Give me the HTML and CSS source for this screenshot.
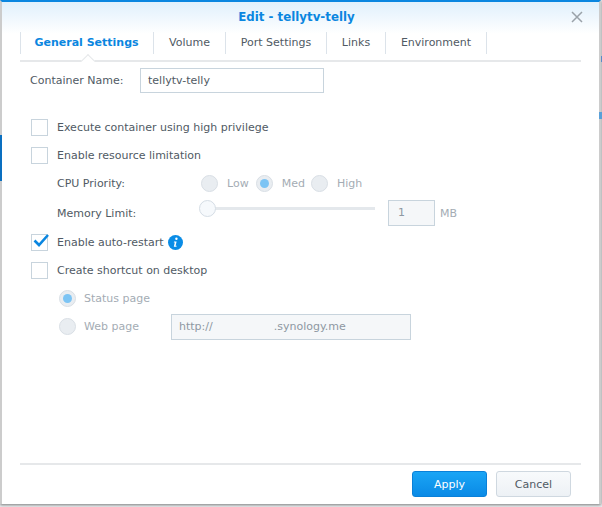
FILE: index.html
```html
<!DOCTYPE html>
<html lang="en">
<head>
  <meta charset="UTF-8">
  <title>Edit - tellytv-telly</title>
  <link rel="stylesheet" href="styles.css">
</head>
<body>
  <div class="dialog">
    <div class="title-row">
      <span class="title">Edit - tellytv-telly</span>
      <svg class="close" width="12" height="12" viewBox="0 0 12 12"><path d="M1 1 11 11M11 1 1 11" stroke="#9aa2a9" stroke-width="1.5" fill="none"/></svg>
    </div>
    <ul class="tabs">
      <li class="tab cur">General Settings</li>
      <li class="tab tab-volume">Volume</li>
      <li class="tab tab-port">Port Settings</li>
      <li class="tab tab-links">Links</li>
      <li class="tab tab-env">Environment</li>
    </ul>
    <div class="body">
      <div class="name-row">
        <label class="name-label">Container Name:</label>
        <div class="field name-field">tellytv-telly</div>
      </div>
      <div class="check-row first"><span class="check"></span>Execute container using high privilege</div>
      <div class="check-row"><span class="check"></span>Enable resource limitation</div>
      <div class="sub-row cpu-row">
        <span class="sub-label">CPU Priority:</span>
        <span class="radio"></span><span class="off radio-low">Low</span>
        <span class="radio on"></span><span class="off radio-med">Med</span>
        <span class="radio"></span><span class="off radio-high">High</span>
      </div>
      <div class="sub-row mem-row">
        <span class="sub-label">Memory Limit:</span>
        <div class="slider"><span class="thumb"></span></div>
        <div class="field off-field mem-field">1</div>
        <span class="off mb">MB</span>
      </div>
      <div class="check-row restart"><span class="check">
        <svg class="tick" width="18" height="16" viewBox="0 0 18 16"><path d="M2.5 8.5 7 13 16 3" stroke="#0a86e0" stroke-width="2.6" fill="none"/></svg>
      </span>Enable auto-restart
        <svg class="info" width="15" height="15" viewBox="0 0 15 15"><circle cx="7.5" cy="7.5" r="7.5" fill="#0a8ce6"/><circle cx="8.4" cy="3.7" r="1.2" fill="#fff"/><path d="M6 6.4h2.6l-1 4.4h1.1l-.3 1H5.800l1-4.400H5.800z" fill="#fff"/></svg>
      </div>
      <div class="check-row shortcut"><span class="check"></span>Create shortcut on desktop</div>
      <div class="page-row status-row"><span class="radio on"></span><span class="off">Status page</span></div>
      <div class="page-row web-row">
        <span class="radio"></span><span class="off web-label">Web page</span>
        <div class="field off-field url-field"><span>http://</span><span class="url-host">.synology.me</span></div>
      </div>
    </div>
    <div class="footer">
      <button class="btn btn-apply">Apply</button>
      <button class="btn">Cancel</button>
    </div>
  </div>
  <div class="edge-mark mark-left"></div>
  <div class="edge-mark mark-right-a"></div>
  <div class="edge-mark mark-right-b"></div>
</body>
</html>
```

FILE: styles.css
```css
*{
	box-sizing: border-box;
}
html,body{
	height: 100%;
}
body{
	margin: 0;
	padding: 0 1px 3px 0;
	background-color: #eef0f2;
	font-family: "DejaVu Sans", sans-serif;
	font-size: 11px;
	color: #505a64;
	position: relative;
	overflow: hidden;
}
/* bits of the desktop showing past the dialog edge */
.edge-mark{
	position: absolute;
}
.mark-left{
	left: 0;
	top: 135px;
	width: 2px;
	height: 46px;
	background-color: #0a6fc0;
}
.mark-right-a{
	right: 0;
	top: 56px;
	width: 1px;
	height: 6px;
	background-color: #5a8ac8;
}
.mark-right-b{
	right: 0;
	top: 112px;
	width: 3px;
	height: 7px;
	background-color: #5aa0d8;
}
.dialog{
	height: 100%;
	display: flex;
	flex-direction: column;
	background: linear-gradient(#e0f0fc 0, #fff 32px);
	background-color: #fff;
	border-top: 2px solid #0a86e0;
	border-left: 2px solid #cccccc;
	border-right: 2px solid #cccccc;
	box-shadow: 0 1px 3px rgba(0,0,0,.5);
}
.title-row{
	height: 30px;
	padding-right: 8px;
	display: flex;
	align-items: center;
	justify-content: center;
	position: relative;
}
.title{
	font-weight: bold;
	font-size: 11.8px;
	color: #0a86e0;
}
.close{
	position: absolute;
	right: 16px;
	top: 9px;
}
.tabs{
	list-style: none;
	margin: 0 18px;
	padding: 0;
	height: 30px;
	display: flex;
	border-bottom: 2px solid #e6e8ea;
	position: relative;
}
.tabs::before{
	content: "";
	position: absolute;
	left: 0;
	top: 0;
	width: 1px;
	height: 22px;
	background-color: #dce3ea;
}
.tab{
	height: 22px;
	line-height: 22px;
	text-align: center;
	border-right: 1px solid #dce3ea;
}
.tab.cur{
	width: 134px;
	font-weight: bold;
	color: #0a86e0;
	position: relative;
}
.tab.cur::after{
	content: "";
	position: absolute;
	left: 63px;
	top: 24px;
	width: 9px;
	height: 9px;
	background-color: #fff;
	border-left: 1px solid #e6e8ea;
	border-top: 1px solid #e6e8ea;
	transform: rotate(45deg);
}
.tab-volume{ width: 72px; }
.tab-port{ width: 101px; }
.tab-links{ width: 59px; }
.tab-env{ width: 101px; }
.body{
	flex: 1;
	padding: 6px 0 0 29px;
}
.name-row{
	display: flex;
	align-items: center;
	height: 25px;
}
.name-label{
	width: 110px;
	margin-left: -1px;
}
.field{
	border: 1px solid #c8d4dd;
	height: 25px;
	line-height: 23px;
	padding-left: 7px;
}
.name-field{
	width: 184px;
}
.off-field{
	background-color: #f5f7f9;
	color: #8e98a2;
}
.check-row{
	display: flex;
	align-items: center;
	height: 16px;
	margin-top: 12px;
}
.check-row.first{
	margin-top: 26px;
}
.check{
	width: 17px;
	height: 17px;
	margin-right: 9px;
	border: 1px solid #c8d4dd;
	position: relative;
	flex: none;
}
.tick{
	position: absolute;
	left: 0;
	top: -3px;
}
.info{
	margin-left: 4px;
}
.sub-row{
	display: flex;
	align-items: center;
	padding-left: 26px;
}
.sub-label{
	width: 143px;
}
.cpu-row{
	height: 17px;
	margin-top: 12px;
}
.cpu-row .sub-label{
	width: 144px;
}
.off{
	color: #a4acb4;
}
.radio{
	width: 17px;
	height: 17px;
	border-radius: 50%;
	background-color: #e9edf1;
	border: 1px solid #d9dfe5;
	flex: none;
	position: relative;
}
.radio.on::after{
	content: "";
	position: absolute;
	left: 3px;
	top: 3px;
	width: 9px;
	height: 9px;
	border-radius: 50%;
	background-color: #7cc4f4;
}
.radio-low{ margin: 0 7px 0 9px; }
.radio-med{ margin: 0 6px 0 9px; }
.radio-high{ margin-left: 9px; }
.mem-row{
	height: 26px;
	margin-top: 8px;
}
.slider{
	width: 175px;
	height: 3px;
	background-color: #e4e8ec;
	position: relative;
	margin-top: -9px;
	margin-right: 13px;
}
.thumb{
	position: absolute;
	left: -1px;
	top: -7px;
	width: 17px;
	height: 17px;
	border-radius: 50%;
	background-color: #f6f9fc;
	border: 1px solid #d5dde5;
}
.mem-field{
	width: 47px;
	height: 26px;
	padding-left: 9px;
}
.mb{
	margin-left: 5px;
}
.restart{
	margin-top: 8px;
}
.shortcut{
	margin-top: 12px;
}
.page-row{
	display: flex;
	align-items: center;
	padding-left: 28px;
}
.page-row .radio{
	margin-right: 8px;
}
.status-row{
	height: 17px;
	margin-top: 12px;
}
.web-row{
	height: 26px;
	margin-top: 7px;
}
.web-row .radio,
.web-label{
	margin-top: -2px;
}
.web-label{
	width: 87px;
}
.url-field{
	width: 240px;
	height: 26px;
	display: flex;
}
.url-host{
	margin-left: 61px;
}
.footer{
	margin: 0 18px;
	height: 41px;
	border-top: 2px solid #e6e8ea;
	display: flex;
	justify-content: flex-end;
	gap: 9px;
	padding: 6px 10px 0 0;
}
.btn{
	width: 75px;
	height: 26px;
	font: 11px "DejaVu Sans", sans-serif;
	border: 1px solid #cfd8e0;
	border-radius: 3px;
	background: linear-gradient(#f8fafc, #edf1f5);
	color: #505a64;
	padding: 0;
}
.btn-apply{
	background: linear-gradient(#1aa5f5, #0a8ae6);
	border-color: #0a80d8;
	color: #fff;
}
```
